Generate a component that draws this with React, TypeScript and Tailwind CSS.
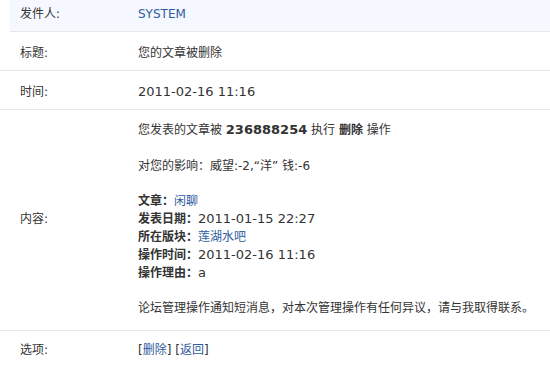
import React from "react";

const font = { fontFamily: '"DejaVu Sans", "Noto Sans CJK SC", sans-serif' };

function Row({ label, children, className = "" }: { label: string; children: React.ReactNode; className?: string }) {
  return (
    <div className={`flex items-center border-b border-[#e6e6e6] pl-[10px] ${className}`}>
      <div className="w-[128px] shrink-0 pl-[10px] text-[12px] text-[#333]">{label}</div>
      <div className="flex-1 text-[12px] text-[#333]">{children}</div>
    </div>
  );
}

export default function App() {
  const link = "text-[#2f5b9e]";
  return (
    <div className="w-[550px] h-[390px] bg-white overflow-hidden" style={font}>
      <div className="ml-[10px] flex h-[32px] items-center border-b border-[#e6e6e6] bg-[#f5f8fe] pb-[3px]">
        <div className="w-[128px] shrink-0 pl-[10px] text-[12px] text-[#333]">发件人:</div>
        <div className={`text-[12px] ${link}`}>SYSTEM</div>
      </div>
      <Row label="标题:" className="h-[39px] pt-[4px]">您的文章被删除</Row>
      <Row label="时间:" className="h-[39px] pt-[4px]"><span className="text-[13px]">2011-02-16 11:16</span></Row>
      <Row label="内容:" className="pt-[11px] pb-[13px]">
        <div className="leading-[18px]">
          <div>
            您发表的文章被 <b className="text-[13px]">236888254</b> 执行 <b>删除</b> 操作
          </div>
          <div className="h-[18px]" />
          <div>对您的影响：威望:-2,“洋” 钱:-6</div>
          <div className="h-[17px]" />
          <div><b>文章：</b><span className={link}>闲聊</span></div>
          <div><b>发表日期：</b><span className="text-[13px]">2011-01-15 22:27</span></div>
          <div><b>所在版块：</b><span className={link}>莲湖水吧</span></div>
          <div><b>操作时间：</b><span className="text-[13px]">2011-02-16 11:16</span></div>
          <div><b>操作理由：</b><span className="text-[13px]">a</span></div>
          <div className="h-[17px]" />
          <div>论坛管理操作通知短消息，对本次管理操作有任何异议，请与我取得联系。</div>
        </div>
      </Row>
      <div className="ml-[10px] flex h-[37px] items-center">
        <div className="w-[128px] shrink-0 pl-[10px] text-[12px] text-[#333]">选项:</div>
        <div className="text-[12px] text-[#333]">
          [<span className={link}>删除</span>] [<span className={link}>返回</span>]
        </div>
      </div>
    </div>
  );
}
